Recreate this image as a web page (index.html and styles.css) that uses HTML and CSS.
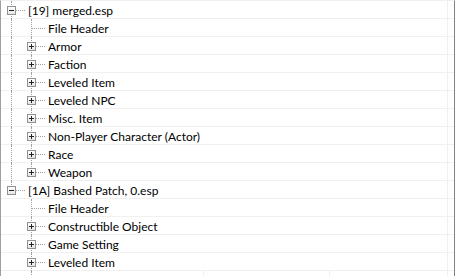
FILE: index.html
```html
<!DOCTYPE html>
<html lang="en">
<head>
    <meta charset="UTF-8">
    <title>Records</title>
    <link rel="stylesheet" href="styles.css">
</head>
<body>
    <div class="tree">
        <div class="row">
            <span class="node top more open"><i class="box"></i></span>
            <span class="label">[19] merged.esp</span>
        </div>
        <div class="row">
            <span class="guide line"></span>
            <span class="node more"></span>
            <span class="label">File Header</span>
        </div>
        <div class="row">
            <span class="guide line"></span>
            <span class="node more"><i class="box"></i></span>
            <span class="label">Armor</span>
        </div>
        <div class="row">
            <span class="guide line"></span>
            <span class="node more"><i class="box"></i></span>
            <span class="label">Faction</span>
        </div>
        <div class="row">
            <span class="guide line"></span>
            <span class="node more"><i class="box"></i></span>
            <span class="label">Leveled Item</span>
        </div>
        <div class="row">
            <span class="guide line"></span>
            <span class="node more"><i class="box"></i></span>
            <span class="label">Leveled NPC</span>
        </div>
        <div class="row">
            <span class="guide line"></span>
            <span class="node more"><i class="box"></i></span>
            <span class="label">Misc. Item</span>
        </div>
        <div class="row">
            <span class="guide line"></span>
            <span class="node more"><i class="box"></i></span>
            <span class="label">Non-Player Character (Actor)</span>
        </div>
        <div class="row">
            <span class="guide line"></span>
            <span class="node more"><i class="box"></i></span>
            <span class="label">Race</span>
        </div>
        <div class="row">
            <span class="guide line"></span>
            <span class="node"><i class="box"></i></span>
            <span class="label">Weapon</span>
        </div>
        <div class="row">
            <span class="node top open"><i class="box"></i></span>
            <span class="label">[1A] Bashed Patch, 0.esp</span>
        </div>
        <div class="row">
            <span class="guide"></span>
            <span class="node more"></span>
            <span class="label">File Header</span>
        </div>
        <div class="row">
            <span class="guide"></span>
            <span class="node more"><i class="box"></i></span>
            <span class="label">Constructible Object</span>
        </div>
        <div class="row">
            <span class="guide"></span>
            <span class="node more"><i class="box"></i></span>
            <span class="label">Game Setting</span>
        </div>
        <div class="row">
            <span class="guide"></span>
            <span class="node more"><i class="box"></i></span>
            <span class="label">Leveled Item</span>
        </div>
        <div class="row">
            <span class="guide"></span>
            <span class="guide line"></span>
            <span class="col c1"></span>
            <span class="col c2"></span>
        </div>
    </div>
</body>
</html>
```

FILE: styles.css
```css
body {
    margin: 0;
    font-family: Lato, "Noto Sans", sans-serif;
    font-size: 12px;
    color: #000;
    background: #fff;
}

.tree {
    width: 453px;
    height: 276px;
    overflow: hidden;
    border-left: 1px solid #a0a0a0;
    border-right: 1px solid #828282;
    border-top: 1px solid #f0f0f0;
    box-shadow: inset -6px 0 0 #fff, inset -7px 0 0 #f0f0f0;
    background: #fff;
}

.row {
    display: flex;
    align-items: center;
    height: 17px;
    border-bottom: 1px solid #f0f0f0;
}

.guide,
.node {
    position: relative;
    flex: none;
    width: 20px;
    height: 100%;
}

/* vertical guide of an ancestor that still has siblings below */
.guide.line::before,
.node::before {
    content: "";
    position: absolute;
    left: 10px;
    top: 0;
    height: 10px;
    border-left: 1px dotted #a0a0a0;
}

.guide.line::before,
.node.more::before {
    height: 18px;
}

/* horizontal connector */
.node::after {
    content: "";
    position: absolute;
    left: 11px;
    top: 9px;
    width: 13px;
    border-top: 1px dotted #a0a0a0;
}

.box {
    position: absolute;
    left: 6px;
    top: 5px;
    width: 7px;
    height: 7px;
    border: 1px solid #919191;
    background: linear-gradient(#fff, #e6e6e6);
    z-index: 1;
}

.box::before,
.box::after {
    content: "";
    position: absolute;
    background: #222;
}

.box::before {
    left: 1px;
    top: 3px;
    width: 5px;
    height: 1px;
}

.box::after {
    left: 3px;
    top: 1px;
    width: 1px;
    height: 5px;
}

.open .box::after {
    display: none;
}

.label {
    position: relative;
    z-index: 1;
    padding-left: 7px;
    white-space: nowrap;
    line-height: 17px;
    padding-top: 1px;
}

.col {
    flex: none;
    height: 100%;
    border-right: 1px solid #f0f0f0;
}

.c1 {
    width: 162px;
}

.c2 {
    width: 125px;
}
```
